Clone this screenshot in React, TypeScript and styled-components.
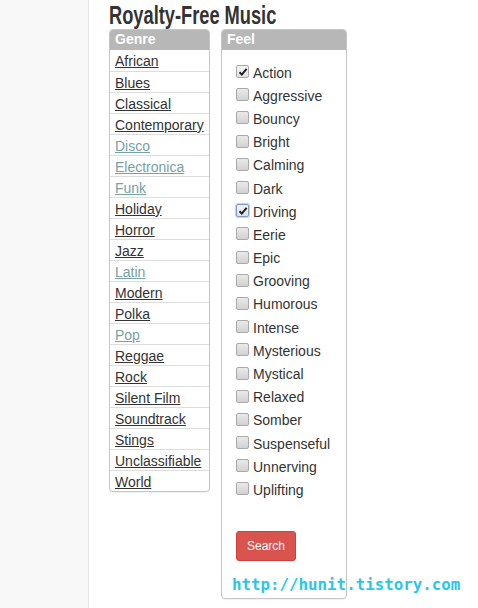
import React from "react";
import styled, { createGlobalStyle } from "styled-components";

const GlobalStyle = createGlobalStyle`
  html, body {
    margin: 0;
    padding: 0;
    background: #ffffff;
    font-family: "Liberation Sans", Arial, sans-serif;
    color: #333333;
  }
`;

const Page = styled.div`
  display: flex;
  min-height: 608px;
  position: relative;
`;

const SideBar = styled.aside`
  width: 88px;
  flex-shrink: 0;
  background: #f8f8f8;
  border-right: 1px solid #e7e7e7;
`;

const Main = styled.main`
  padding-left: 20px;
`;

const Title = styled.h1`
  margin: 0;
  height: 29px;
  font-family: "Liberation Sans", Arial, sans-serif;
  font-weight: bold;
  font-size: 25px;
  line-height: 31px;
  color: #333333;
  white-space: nowrap;
  transform: scaleX(0.73);
  transform-origin: left center;
`;

const Panels = styled.div`
  display: flex;
  align-items: flex-start;
  gap: 11px;
`;

const Panel = styled.section<{ $width: number }>`
  width: ${(p) => p.$width}px;
  box-sizing: border-box;
  border: 1px solid #c6c6c6;
  border-radius: 4px;
  box-shadow: 0 1px 1px rgba(0, 0, 0, 0.06);
  overflow: hidden;
  background: #ffffff;
`;

const PanelHeader = styled.header`
  height: 21px;
  line-height: 21px;
  margin: -1px -1px 0 -1px;
  padding: 0 6px;
  background: #b7b7b7;
  color: #ffffff;
  font-weight: bold;
  font-size: 14px;
  border-radius: 4px 4px 0 0;
`;

const GenreList = styled.ul`
  list-style: none;
  margin: 0;
  padding: 0;
`;

const GenreItem = styled.li`
  height: 20px;
  line-height: 22px;
  padding-left: 5px;
  border-top: 1px solid #dddddd;
  font-size: 14px;
  white-space: nowrap;
  &:first-child {
    border-top: none;
    height: 21px;
    line-height: 22px;
  }
`;

const GenreLink = styled.a<{ $visited?: boolean }>`
  color: ${(p) => (p.$visited ? "#78a1a1" : "#333333")};
  text-decoration: underline;
`;

const FeelBody = styled.div`
  padding: 11px 15px 37px 14px;
`;

const FeelList = styled.div`
  display: flex;
  flex-direction: column;
`;

const FeelItem = styled.label`
  height: 23.2px;
  display: flex;
  align-items: center;
  gap: 4px;
  font-size: 14px;
  color: #333333;
`;

const Box = styled.span<{ $checked?: boolean; $focus?: boolean }>`
  width: 11px;
  height: 11px;
  border: 1px solid ${(p) => (p.$focus ? "#7c9ad6" : "#a9a9a9")};
  border-radius: 2px;
  background: ${(p) =>
    p.$checked
      ? "linear-gradient(#f4f4f4, #e2e2e2)"
      : "linear-gradient(#e9e9e9, #d2d2d2)"};
  box-shadow: ${(p) => (p.$focus ? "0 0 0 1px #c3d3f2" : "none")};
  display: flex;
  align-items: center;
  justify-content: center;
  margin-top: -2px;
`;

const SearchButton = styled.button`
  margin-top: 29px;
  height: 30px;
  padding: 0 10px;
  background: #d9534f;
  border: 1px solid #d43f3a;
  border-radius: 3px;
  color: #ffffff;
  font-family: "Liberation Sans", Arial, sans-serif;
  font-size: 12px;
`;

const Watermark = styled.div`
  position: absolute;
  left: 232px;
  top: 575px;
  font-family: "DejaVu Sans Mono", monospace;
  font-size: 15.8px;
  font-weight: bold;
  color: #2ac6e8;
`;

const genres: [string, boolean][] = [
  ["African", false],
  ["Blues", false],
  ["Classical", false],
  ["Contemporary", false],
  ["Disco", true],
  ["Electronica", true],
  ["Funk", true],
  ["Holiday", false],
  ["Horror", false],
  ["Jazz", false],
  ["Latin", true],
  ["Modern", false],
  ["Polka", false],
  ["Pop", true],
  ["Reggae", false],
  ["Rock", false],
  ["Silent Film", false],
  ["Soundtrack", false],
  ["Stings", false],
  ["Unclassifiable", false],
  ["World", false],
];

const feels = [
  "Action",
  "Aggressive",
  "Bouncy",
  "Bright",
  "Calming",
  "Dark",
  "Driving",
  "Eerie",
  "Epic",
  "Grooving",
  "Humorous",
  "Intense",
  "Mysterious",
  "Mystical",
  "Relaxed",
  "Somber",
  "Suspenseful",
  "Unnerving",
  "Uplifting",
];

const checked = ["Action", "Driving"];

const Check = () => (
  <svg width="10" height="10" viewBox="0 0 10 10">
    <path
      d="M1.5 5.2 L3.8 7.6 L8.6 1.8"
      fill="none"
      stroke="#222"
      strokeWidth="2"
    />
  </svg>
);

const App: React.FC = () => {
  return (
    <>
      <GlobalStyle />
      <Page>
        <SideBar />
        <Main>
          <Title>Royalty-Free Music</Title>
          <Panels>
            <Panel $width={101}>
              <PanelHeader>Genre</PanelHeader>
              <GenreList>
                {genres.map(([name, visited]) => (
                  <GenreItem key={name}>
                    <GenreLink href="#" $visited={visited}>
                      {name}
                    </GenreLink>
                  </GenreItem>
                ))}
              </GenreList>
            </Panel>
            <Panel $width={126}>
              <PanelHeader>Feel</PanelHeader>
              <FeelBody>
                <FeelList>
                  {feels.map((f) => (
                    <FeelItem key={f}>
                      <Box
                        $checked={checked.includes(f)}
                        $focus={f === "Driving"}
                      >
                        {checked.includes(f) && <Check />}
                      </Box>
                      {f}
                    </FeelItem>
                  ))}
                </FeelList>
                <SearchButton>Search</SearchButton>
              </FeelBody>
            </Panel>
          </Panels>
        </Main>
        <Watermark>http://hunit.tistory.com</Watermark>
      </Page>
    </>
  );
};

export default App;
